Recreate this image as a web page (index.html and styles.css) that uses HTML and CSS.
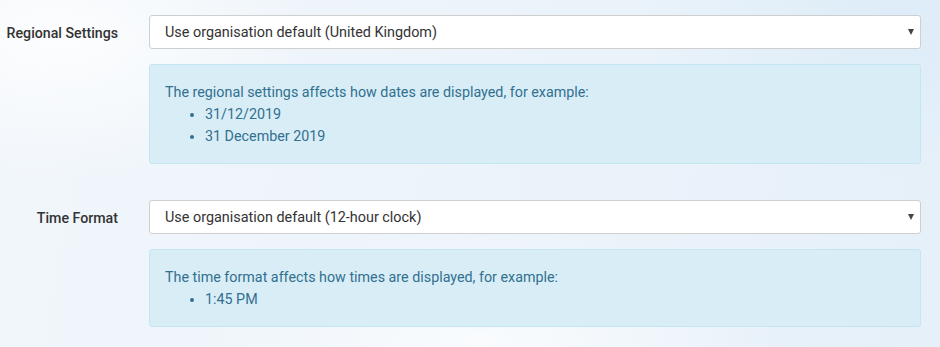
FILE: index.html
```html
<!DOCTYPE html>
<html lang="en">
<head>
  <meta charset="UTF-8" />
  <title>Regional Settings</title>
  <link rel="stylesheet" href="styles.css">
</head>
<body>
  <div class="settings">
    <div class="form-group">
      <label class="field-label" for="regional">Regional Settings</label>
      <div class="select-wrap">
        <select id="regional" class="field-select">
          <option>Use organisation default (United Kingdom)</option>
        </select>
      </div>
      <div class="info">
        The regional settings affects how dates are displayed, for example:
        <ul>
          <li>31/12/2019</li>
          <li>31 December 2019</li>
        </ul>
      </div>
    </div>

    <div class="form-group">
      <label class="field-label" for="timeFormat">Time Format</label>
      <div class="select-wrap">
        <select id="timeFormat" class="field-select">
          <option>Use organisation default (12-hour clock)</option>
        </select>
      </div>
      <div class="info">
        The time format affects how times are displayed, for example:
        <ul>
          <li>1:45 PM</li>
        </ul>
      </div>
    </div>
  </div>
</body>
</html>
```

FILE: styles.css
```css
body {
  margin: 0;
  padding: 0;
  font-family: Roboto, 'Liberation Sans', sans-serif;
  min-height: 347px;
  background-color: #ebf3fa;
  background-image:
    radial-gradient(ellipse 260px 140px at 60px 40px, rgba(255,255,255,0.8), rgba(255,255,255,0)),
    radial-gradient(ellipse 300px 120px at 480px 340px, rgba(255,255,255,0.7), rgba(255,255,255,0)),
    radial-gradient(ellipse 260px 160px at 900px 20px, rgba(220,236,248,0.9), rgba(220,236,248,0)),
    linear-gradient(100deg, #f1f6fb 0%, #ebf3fa 60%, #e6f0f9 100%);
  color: #333;
}
.settings {
  padding: 15px 19px 0 0;
}
.form-group {
  display: grid;
  grid-template-columns: 118px 772px;
  column-gap: 31px;
  row-gap: 15px;
  margin-bottom: 36px;
}
.field-label {
  grid-column: 1;
  text-align: right;
  font-size: 14.2px;
  font-weight: 500;
  line-height: 20px;
  padding-top: 8px;
  color: #333;
}
.select-wrap {
  grid-column: 2;
  position: relative;
}
.select-wrap::after {
  content: "";
  position: absolute;
  right: 7px;
  top: 14px;
  border-left: 3.5px solid transparent;
  border-right: 3.5px solid transparent;
  border-top: 6px solid #444;
}
.field-select {
  appearance: none;
  -webkit-appearance: none;
  width: 100%;
  height: 34px;
  margin: 0;
  padding: 0 30px 0 15px;
  border: 1px solid #cfcfcf;
  border-radius: 3px;
  background: #fff;
  font-family: Roboto, 'Liberation Sans', sans-serif;
  font-size: 14.4px;
  color: #333;
}
.info {
  grid-column: 2;
  padding: 16px 15px;
  border: 1px solid #c4e6f3;
  border-radius: 3px;
  background: #d9edf7;
  color: #31708f;
  font-size: 14.3px;
  line-height: 22px;
}
.info ul {
  margin: 0;
  padding-left: 40px;
}
```
